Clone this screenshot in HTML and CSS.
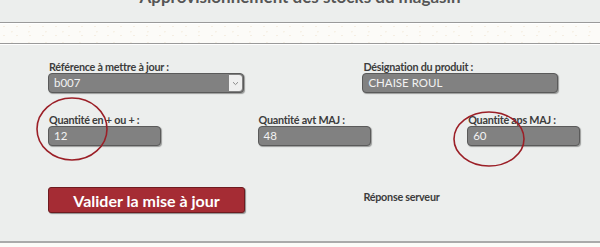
FILE: index.html
```html
<!DOCTYPE html>
<html lang="fr">
<head>
    <meta charset="utf-8">
    <title>Approvisionnement</title>
    <link rel="stylesheet" href="styles.css">
</head>
<body>
    <h1 class="titre">Approvisionnement des stocks du magasin</h1>
    <div class="bandeau"></div>
    <div class="formulaire">
        <div class="champ large">
            <label class="etiquette">Référence à mettre à jour :</label>
            <div class="liste">
                <span>b007</span>
                <span class="fleche">
                    <svg width="7" height="5" viewBox="0 0 7 5"><path d="M1 1.2 L3.5 3.6 L6 1.2" fill="none" stroke="#8a8a8a" stroke-width="1"/></svg>
                </span>
            </div>
        </div>
        <div class="champ large col4">
            <label class="etiquette">Désignation du produit :</label>
            <div class="zone">CHAISE ROUL</div>
        </div>

        <div class="champ court entoure">
            <label class="etiquette">Quantité en + ou + :</label>
            <div class="zone">12</div>
            <svg class="cercle c1" width="74" height="66" viewBox="0 0 74 66"><ellipse cx="37" cy="33" rx="35" ry="31" fill="none" stroke="#9b1f27" stroke-width="1.6"/></svg>
        </div>
        <div class="champ court col3">
            <label class="etiquette">Quantité avt MAJ :</label>
            <div class="zone">48</div>
        </div>
        <div class="champ court col5 entoure">
            <label class="etiquette">Quantité aps MAJ :</label>
            <div class="zone">60</div>
            <svg class="cercle c2" width="74" height="58" viewBox="0 0 74 58"><ellipse cx="37" cy="29" rx="35" ry="27" fill="none" stroke="#9b1f27" stroke-width="1.6"/></svg>
        </div>

        <button class="valider">Valider la mise à jour</button>
        <div class="reponse col4">Réponse serveur</div>
    </div>
    <div class="pied"></div>
</body>
</html>
```

FILE: styles.css
```css
body {
    margin: 0;
    background-color: #eceeed;
    font-family: Lato, "Open Sans", sans-serif;
    color: #444;
    overflow: hidden;
}

.titre {
    margin: -14px 0 0;
    text-align: center;
    font-size: 17px;
    line-height: 22px;
    font-weight: bold;
    color: #555;
}

.bandeau {
    margin-top: 14px;
    height: 20px;
    border-top: 1px solid #9a9a9a;
    border-bottom: 1px solid #9a9a9a;
    box-shadow: inset 0 1px 0 #fff, 0 1px 0 #fff;
    background-color: #fcfbf8;
    background-image:
        radial-gradient(circle at 30% 40%, #f5eee2 0.6px, transparent 1px),
        radial-gradient(circle at 70% 80%, #f7f1e6 0.6px, transparent 1px);
    background-size: 13px 9px, 17px 11px;
}

.formulaire {
    display: grid;
    grid-template-columns: repeat(6, 104.8px);
    grid-auto-rows: auto;
    padding: 16px 0 0 48px;
}

.champ {
    display: flex;
    flex-direction: column;
    position: relative;
}

.large {
    grid-column: span 2;
    margin-bottom: 20px;
}

.col4 {
    grid-column: 4 / span 2;
}

.court {
    grid-column: 1;
    margin-bottom: 41px;
}

.col3 {
    grid-column: 3;
}

.col5 {
    grid-column: 5;
}

.etiquette {
    font-size: 10.8px;
    letter-spacing: -0.25px;
    font-weight: bold;
    line-height: 13px;
    padding-left: 1px;
    color: #3c3c3c;
}

.zone,
.liste {
    box-sizing: border-box;
    height: 20px;
    background-color: #818181;
    border: 1px solid #5a5a5a;
    border-radius: 4px;
    box-shadow: 1px 1px 1px rgba(0, 0, 0, 0.35);
    color: #f2f2f2;
    font-size: 11.5px;
    line-height: 18px;
    padding-left: 5px;
}

.large .zone,
.liste {
    width: 196px;
}

.court .zone {
    width: 113px;
}

.liste {
    display: flex;
    justify-content: space-between;
    padding-right: 1px;
}

.fleche {
    display: flex;
    align-items: center;
    justify-content: center;
    width: 13px;
    margin: 1px 0;
    background-color: #efefef;
    border-radius: 0 3px 3px 0;
}

.cercle {
    position: absolute;
    pointer-events: none;
}

.c1 {
    left: -13px;
    top: -17px;
}

.c2 {
    left: -15px;
    top: -3px;
}

.valider {
    grid-column: 1 / span 2;
    width: 197px;
    height: 26px;
    padding: 0;
    background-color: #a52c34;
    border: 1px solid #6e1b20;
    border-radius: 3px;
    box-shadow: 1px 1px 1px rgba(0, 0, 0, 0.4);
    color: #fff;
    font-family: Lato, "Open Sans", sans-serif;
    font-size: 16px;
    font-weight: bold;
}

.reponse {
    font-size: 10.8px;
    letter-spacing: -0.25px;
    font-weight: bold;
    padding: 3px 0 0 1px;
    color: #3c3c3c;
}

.pied {
    margin-top: 28px;
    height: 10px;
    border-top: 2px solid #aaa;
    background-color: #fcfbf8;
}
```
